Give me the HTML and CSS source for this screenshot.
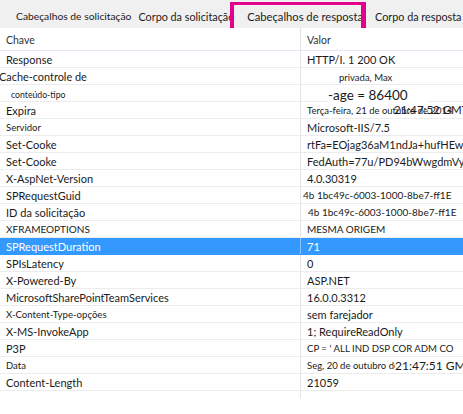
FILE: index.html
```html
<!DOCTYPE html>
<html lang="pt">
<head>
<meta charset="utf-8">
<title>Cabeçalhos de resposta</title>
<link rel="stylesheet" href="styles.css">
</head>
<body>
<div class="panel">
  <nav class="tabs">
    <span class="tab t1">Cabeçalhos de solicitação</span>
    <span class="tab t2">Corpo da solicitação</span>
    <span class="tab t3 active">Cabeçalhos de resposta</span>
    <span class="tab t4">Corpo da resposta</span>
  </nav>
  <div class="grid">
    <div class="row head"><div class="k">Chave</div><div class="v">Valor</div></div>
    <div class="row"><div class="k">Response</div><div class="v">HTTP/I. 1 200 OK</div></div>
    <div class="row"><div class="k big shift">Cache-controle de</div><div class="v"><span class="small centered">privada, Max</span></div></div>
    <div class="row"><div class="k tiny ind"><span class="wb">conteúdo-tipo</span></div><div class="v vis"><span class="huge">-age = 86400</span></div></div>
    <div class="row"><div class="k">Expira</div><div class="v ov"><span class="small">Terça-feira, 21 de outubro de 2014</span><span class="over">21:47:52 GMT</span></div></div>
    <div class="row"><div class="k small">Servidor</div><div class="v">Microsoft-IIS/7.5</div></div>
    <div class="row"><div class="k">Set-Cooke</div><div class="v">rtFa=EOjag36aM1ndJa+hufHEwBHlNkwAAAA</div></div>
    <div class="row"><div class="k">Set-Cooke</div><div class="v">FedAuth=77u/PD94bWwgdmVyc2lvbj0iMS4w</div></div>
    <div class="row"><div class="k">X-AspNet-Version</div><div class="v">4.0.30319</div></div>
    <div class="row"><div class="k">SPRequestGuid</div><div class="v mid nudge">4b 1bc49c-6003-1000-8be7-ff1E</div></div>
    <div class="row"><div class="k">ID da solicitação</div><div class="v mid push">4b 1bc49c-6003-1000-8be7-ff1E</div></div>
    <div class="row"><div class="k mid">XFRAMEOPTIONS</div><div class="v mid">MESMA ORIGEM</div></div>
    <div class="row sel"><div class="k">SPRequestDuration</div><div class="v">71</div></div>
    <div class="row"><div class="k">SPIsLatency</div><div class="v">0</div></div>
    <div class="row"><div class="k">X-Powered-By</div><div class="v">ASP.NET</div></div>
    <div class="row"><div class="k">MicrosoftSharePointTeamServices</div><div class="v">16.0.0.3312</div></div>
    <div class="row"><div class="k opt">X-Content-Type-opções</div><div class="v">sem farejador</div></div>
    <div class="row"><div class="k">X-MS-InvokeApp</div><div class="v">1; RequireReadOnly</div></div>
    <div class="row"><div class="k">P3P</div><div class="v p3p">CP = ' ALL IND DSP COR ADM CO</div></div>
    <div class="row"><div class="k small">Data</div><div class="v ov"><span class="small">Seg, 20 de outubro de 2014</span><span class="over o2">21:47:51 GMT</span></div></div>
    <div class="row"><div class="k">Content-Length</div><div class="v">21059</div></div>
    <div class="row tail"><div class="k"></div><div class="v"></div></div>
  </div>
</div>
</body>
</html>
```

FILE: styles.css
```css
* { box-sizing: border-box; }
html, body { margin: 0; padding: 0; background: #ffffff; }
body {
  width: 463px;
  height: 414px;
  overflow: hidden;
  font-family: Lato, "Noto Sans", "Liberation Sans", sans-serif;
  color: #1b1b1b;
}
.panel { display: flex; flex-direction: column; }
.tabs {
  height: 28px;
  padding-top: 4px;
  background: #f0f0f0;
  display: flex;
  align-items: center;
  white-space: nowrap;
  overflow: hidden;
  position: relative;
}
.tab { flex: none; }
.t1 { margin-left: 16px; font-size: 10.3px; }
.t2 { margin-left: 7px; font-size: 10.8px; }
.t3 { margin-left: 13px; font-size: 11.2px; }
.t4 { margin-left: 12px; font-size: 10.8px; }
.active::before {
  content: "";
  position: absolute;
  left: 230px;
  top: 2px;
  width: 127px;
  height: 27px;
  border: 4px solid #e3008c;
  border-top-width: 3px;
  border-right-width: 5px;
}
.grid { display: flex; flex-direction: column; }
.row {
  display: grid;
  grid-template-columns: 300px 1fr;
  height: 17px;
  border-bottom: 1px solid #ececec;
  font-size: 11px;
  white-space: nowrap;
}
.row.head { height: 23px; border-bottom: 1px solid #e3e9f3; color: #333; font-size: 10.5px; }
.row.head .k, .row.head .v { padding-top: 2px; }
.row.tail { height: 7px; border-bottom: none; }
.k, .v {
  display: flex;
  align-items: center;
  overflow: hidden;
  min-width: 0;
}
.k { padding-left: 6px; }
.v { padding-left: 6px; border-left: 1px solid #e4e4e4; }
.v.vis { overflow: visible; }
.small { font-size: 9.5px; }
.tiny { font-size: 8.7px; }
.mid { font-size: 10px; }
.opt { font-size: 9.6px; }
.p3p { font-size: 9.6px; }
.big { font-size: 10.9px; }
.shift { padding-left: 0; margin-left: -1px; }
.ind { padding-left: 11px; }
.wb { background: #fff; padding-right: 2px; }
.huge { font-size: 13.5px; line-height: 15px; margin-left: 21px; margin-top: 3px; background: #fff; padding-right: 20px; }
.centered { margin-left: 32px; margin-top: 2px; }
.nudge { padding-left: 2px; }
.push { padding-left: 7px; }
.ov { position: relative; }
.over {
  position: absolute;
  left: 93px;
  top: 0;
  font-size: 11.5px;
  line-height: 15px;
  color: #1b1b1b;
}
.o2 { left: 94px; top: 1px; font-size: 12px; background: #fff; }
.row.sel { background: #3399ff; color: #fff; border-bottom-color: #3399ff; }
.row.sel .v { border-left-color: #8cc4ff; }
```
